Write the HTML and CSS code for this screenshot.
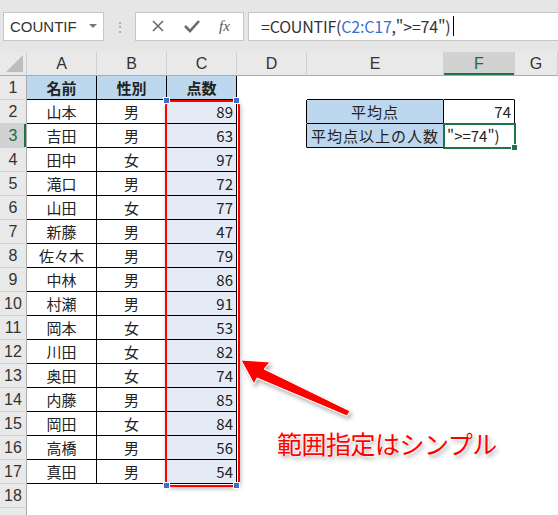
FILE: index.html
```html
<!DOCTYPE html>
<html lang="ja">
<head>
    <meta charset="UTF-8">
    <title>COUNTIF</title>
    <link rel="stylesheet" href="styles.css">
</head>
<body>
    <div class="toolbar">
        <div class="name-box">
            <span>COUNTIF</span>
            <span class="drop"></span>
        </div>
        <div class="dots">⋮</div>
        <div class="fx-box">
            <svg class="icon" width="14" height="14" viewBox="0 0 14 14"><path d="M2 2 L12 12 M12 2 L2 12" stroke="#6b6b6b" stroke-width="1.6" fill="none"/></svg>
            <svg class="icon" width="18" height="14" viewBox="0 0 18 14"><path d="M2 7 L7 12 L16 2" stroke="#6b6b6b" stroke-width="2.6" fill="none"/></svg>
            <span class="fx">fx</span>
        </div>
        <div class="formula">=COUNTIF(<span class="ref">C2:C17</span>,"&gt;=74")<span class="caret"></span></div>
    </div>

    <div class="sheet">
        <table>
            <colgroup>
                <col style="width:27px"><col style="width:70px"><col style="width:70px"><col style="width:70px">
                <col style="width:70px"><col style="width:137px"><col style="width:71px"><col style="width:43px">
            </colgroup>
            <tr class="cols">
                <td class="corner"><span></span></td>
                <td>A</td><td>B</td><td>C</td><td>D</td><td>E</td><td class="on">F</td><td>G</td>
            </tr>
            <tr>
                <td class="rh">1</td>
                <td class="b hd">名前</td><td class="b hd">性別</td><td class="b hd">点数</td>
                <td></td><td class="bb"></td><td class="bb"></td><td></td>
            </tr>
            <tr>
                <td class="rh">2</td>
                <td class="b c">山本</td><td class="b c">男</td><td class="b sel n">89</td>
                <td class="br"></td><td class="b fill c">平均点</td><td class="b n">74</td><td></td>
            </tr>
            <tr>
                <td class="rh on">3</td>
                <td class="b c">吉田</td><td class="b c">男</td><td class="b sel n">63</td>
                <td class="br"></td><td class="b fill c">平均点以上の人数</td><td class="b active">"&gt;=74")</td><td></td>
            </tr>
            <tr><td class="rh">4</td><td class="b c">田中</td><td class="b c">女</td><td class="b sel n">97</td><td></td><td></td><td></td><td></td></tr>
            <tr><td class="rh">5</td><td class="b c">滝口</td><td class="b c">男</td><td class="b sel n">72</td><td></td><td></td><td></td><td></td></tr>
            <tr><td class="rh">6</td><td class="b c">山田</td><td class="b c">女</td><td class="b sel n">77</td><td></td><td></td><td></td><td></td></tr>
            <tr><td class="rh">7</td><td class="b c">新藤</td><td class="b c">男</td><td class="b sel n">47</td><td></td><td></td><td></td><td></td></tr>
            <tr><td class="rh">8</td><td class="b c">佐々木</td><td class="b c">男</td><td class="b sel n">79</td><td></td><td></td><td></td><td></td></tr>
            <tr><td class="rh">9</td><td class="b c">中林</td><td class="b c">男</td><td class="b sel n">86</td><td></td><td></td><td></td><td></td></tr>
            <tr><td class="rh">10</td><td class="b c">村瀬</td><td class="b c">男</td><td class="b sel n">91</td><td></td><td></td><td></td><td></td></tr>
            <tr><td class="rh">11</td><td class="b c">岡本</td><td class="b c">女</td><td class="b sel n">53</td><td></td><td></td><td></td><td></td></tr>
            <tr><td class="rh">12</td><td class="b c">川田</td><td class="b c">女</td><td class="b sel n">82</td><td></td><td></td><td></td><td></td></tr>
            <tr><td class="rh">13</td><td class="b c">奥田</td><td class="b c">女</td><td class="b sel n">74</td><td></td><td></td><td></td><td></td></tr>
            <tr><td class="rh">14</td><td class="b c">内藤</td><td class="b c">男</td><td class="b sel n">85</td><td></td><td></td><td></td><td></td></tr>
            <tr><td class="rh">15</td><td class="b c">岡田</td><td class="b c">女</td><td class="b sel n">84</td><td></td><td></td><td></td><td></td></tr>
            <tr><td class="rh">16</td><td class="b c">高橋</td><td class="b c">男</td><td class="b sel n">56</td><td></td><td></td><td></td><td></td></tr>
            <tr><td class="rh">17</td><td class="b c">真田</td><td class="b c">男</td><td class="b sel n">54</td><td></td><td></td><td></td><td></td></tr>
            <tr><td class="rh">18</td><td></td><td></td><td></td><td></td><td></td><td></td><td></td></tr>
            <tr><td class="rh"></td><td></td><td></td><td></td><td></td><td></td><td></td><td></td></tr>
        </table>

        <!-- annotation -->
        <div class="range"></div>
        <span class="handle h1"></span><span class="handle h2"></span>
        <span class="handle h3"></span><span class="handle h4"></span>
        <svg class="arrow" width="140" height="90" viewBox="0 0 140 90">
            <defs>
                <filter id="sh" x="-20%" y="-20%" width="140%" height="140%">
                    <feDropShadow dx="2" dy="3" stdDeviation="2" flood-color="#000" flood-opacity="0.3"/>
                </filter>
            </defs>
            <polygon points="11,20 40,22 34,29 120,71 117,76 27,38 24,44" fill="#ff0000" stroke="#fff" stroke-width="1" filter="url(#sh)"/>
        </svg>
        <div class="note">範囲指定はシンプル</div>
    </div>
</body>
</html>
```

FILE: styles.css
```css
body {
    margin: 0;
    width: 558px;
    height: 515px;
    overflow: hidden;
    font-family: "Noto Sans CJK JP", "Noto Sans", sans-serif;
    color: #222;
    background: #fff;
}

.toolbar {
    display: flex;
    align-items: center;
    height: 52px;
    background: #e6e6e6;
    padding-left: 3px;
    box-sizing: border-box;
}

.name-box {
    display: flex;
    align-items: center;
    justify-content: space-between;
    width: 101px;
    height: 29px;
    box-sizing: border-box;
    background: #fff;
    border: 1px solid #c6c6c6;
    padding: 0 6px 0 6px;
    font-family: "Liberation Sans", sans-serif;
    font-size: 15px;
    color: #333;
}

.name-box .drop {
    width: 0;
    height: 0;
    border-left: 4px solid transparent;
    border-right: 4px solid transparent;
    border-top: 4px solid #777;
}

.dots {
    width: 31px;
    text-align: center;
    color: #a0a0a0;
    font-size: 14px;
}

.fx-box {
    display: flex;
    align-items: center;
    justify-content: space-around;
    width: 109px;
    height: 29px;
    box-sizing: border-box;
    background: #fff;
    border: 1px solid #c6c6c6;
    padding: 0 4px 0 6px;
}

.fx {
    font-family: "Liberation Serif", serif;
    font-style: italic;
    font-size: 15px;
    color: #555;
}

.formula {
    flex: 1;
    display: flex;
    align-items: center;
    height: 29px;
    margin-left: 4px;
    box-sizing: border-box;
    background: #fff;
    border: 1px solid #c6c6c6;
    border-right: none;
    padding-left: 12px;
    font-size: 16px;
    color: #333;
    letter-spacing: -0.2px;
}

.formula .ref {
    color: #3a6fd0;
}

.caret {
    display: inline-block;
    width: 1px;
    height: 20px;
    background: #000;
    margin-left: 2px;
}

.sheet {
    position: relative;
}

table {
    table-layout: fixed;
    width: 558px;
    border-collapse: separate;
    border-spacing: 0;
    font-size: 15px;
}

td {
    height: 24px;
    padding: 0 3px;
    box-sizing: border-box;
    line-height: 22px;
    border-right: 1px solid transparent;
    border-bottom: 1px solid transparent;
    white-space: nowrap;
    overflow: visible;
}

.cols td {
    background: #e9e9e9;
    border-right: 1px solid #d0d0d0;
    border-bottom: 1px solid #ababab;
    text-align: center;
    color: #333;
    font-family: "Liberation Sans", sans-serif;
    font-size: 16px;
}

.cols td.on {
    background: #d2d2d2;
    color: #1e6b40;
    box-shadow: inset 0 -2px 0 #217346;
}

.corner {
    position: relative;
}

.corner span {
    position: absolute;
    right: 3px;
    bottom: 3px;
    border-left: 17px solid transparent;
    border-bottom: 17px solid #bdbdbd;
}

.rh {
    background: #e9e9e9;
    border-right: 1px solid #ababab;
    border-bottom: 1px solid #d0d0d0;
    text-align: center;
    color: #333;
    font-family: "Liberation Sans", sans-serif;
    font-size: 16px;
    padding: 0;
}

.rh.on {
    background: #d2d2d2;
    color: #1e6b40;
    box-shadow: inset -2px 0 0 #217346;
}

.b {
    border-right: 1px solid #000;
    border-bottom: 1px solid #000;
}

.bb {
    border-bottom: 1px solid #000;
}

.br {
    border-right: 1px solid #000;
}

.hd {
    background: #bdd7ee;
    font-weight: bold;
    text-align: center;
}

.c {
    text-align: center;
}

.fill {
    background: #bdd7ee;
    letter-spacing: 1px;
}

.n {
    text-align: right;
}

.sel {
    background: #e5ebf6;
}

.active {
    position: relative;
    outline: 2px solid #217346;
    outline-offset: -1px;
}

.active::after {
    content: "";
    position: absolute;
    right: -4px;
    bottom: -4px;
    width: 5px;
    height: 5px;
    background: #217346;
    border: 1px solid #fff;
}

.range {
    position: absolute;
    left: 165px;
    top: 48px;
    width: 75px;
    height: 387px;
    box-sizing: border-box;
    border: 2px solid #ff0000;
    border-radius: 6px;
    box-shadow: 1px 2px 4px rgba(0, 0, 0, 0.25);
}

.handle {
    position: absolute;
    width: 5px;
    height: 5px;
    background: #3c6fc8;
    border: 1px solid #fff;
}

.h1 { left: 163px; top: 45px; }
.h2 { left: 233px; top: 45px; }
.h3 { left: 163px; top: 430px; }
.h4 { left: 233px; top: 430px; }

.arrow {
    position: absolute;
    left: 230px;
    top: 288px;
}

.note {
    position: absolute;
    left: 277px;
    top: 374px;
    font-size: 25px;
    line-height: 34px;
    color: #ff0000;
    letter-spacing: -0.5px;
    text-shadow: 0 0 2px #fff, 0 0 2px #fff, 2px 3px 4px rgba(0, 0, 0, 0.35);
}
```
